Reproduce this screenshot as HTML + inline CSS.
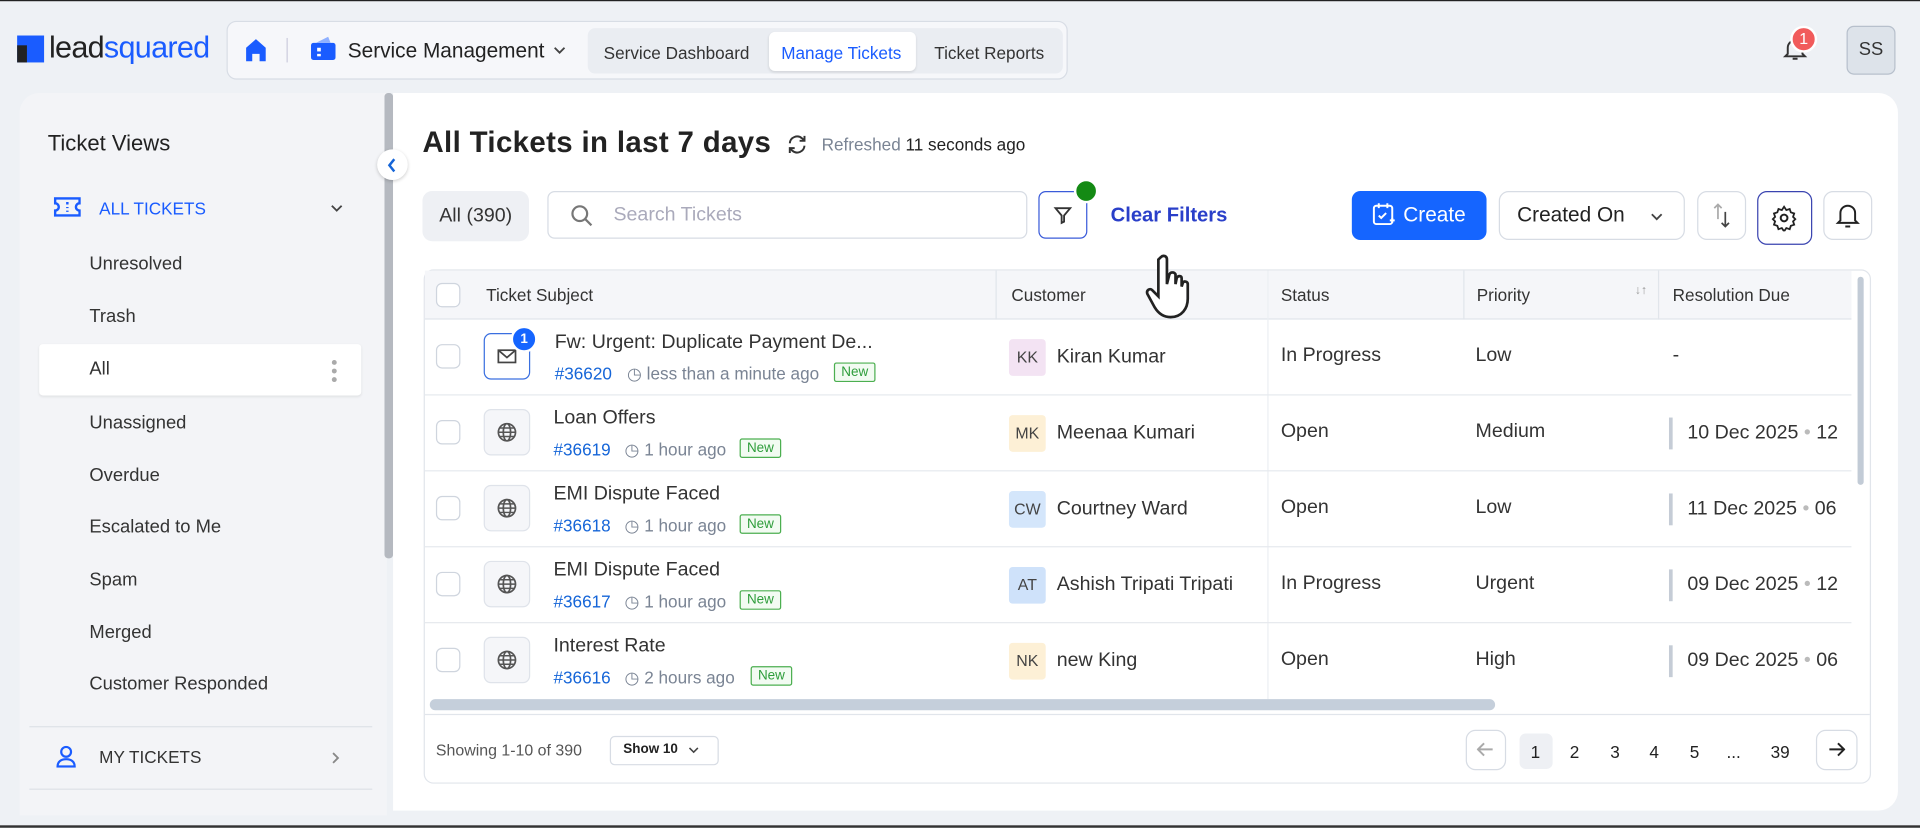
<!DOCTYPE html>
<html><head><meta charset="utf-8"><style>
*{box-sizing:border-box;margin:0;padding:0}
body{width:1920px;height:828px;overflow:hidden;background:#eef0f4;font-family:"Liberation Sans",sans-serif;color:#222b38}
#w{position:absolute;left:0;top:0;width:1568px;height:676px;transform:scale(1.22449);transform-origin:0 0;background:#eef1f5;border-top:1px solid #222;border-bottom:2px solid #333}
.a{position:absolute}
.t{position:absolute;white-space:nowrap}
.cb{position:absolute;width:20px;height:20px;border:1px solid #cfd5de;border-radius:5px;background:#fff}
.ic{position:absolute;width:38px;height:38px;border:1px solid #dfe3ea;border-radius:6px;background:#f5f6f9}
.av{position:absolute;width:30px;height:30px;border-radius:3px;font-size:13px;color:#444;text-align:center;line-height:30px}
.new{position:absolute;border:1px solid #4caf50;color:#2e9d3b;background:#f2fbf2;font-size:11px;padding:1px 5px;border-radius:2px}
.id{color:#1565d8;font-size:14px}
.mt{color:#7a8494;font-size:14px}
.cell{font-size:16px;color:#333}
.sb{position:absolute;left:73px;font-size:15px;color:#333}
.btn{position:absolute;border:1px solid #d7dce4;border-radius:8px;background:#fff}
</style></head><body><div id="w">
<svg width="0" height="0" style="position:absolute"><defs><g id="globe"><circle cx="8" cy="8" r="7" fill="none" stroke="#555" stroke-width="1.4"/><ellipse cx="8" cy="8" rx="3" ry="7" fill="none" stroke="#555" stroke-width="1.4"/><path d="M1 8h14M2 4.5h12M2 11.5h12" stroke="#555" stroke-width="1.2"/></g><path id="chev" d="M1 1l4 4 4-4" fill="none" stroke="#444" stroke-width="1.5"/></defs></svg>
<!-- logo -->
<div class="a" style="left:14px;top:28px;width:22px;height:22px;background:#1a5cff"></div>
<div class="a" style="left:14px;top:36px;width:8px;height:14px;background:#222"></div>
<div class="t" style="left:40px;top:24px;font-size:25px;letter-spacing:-0.6px;color:#222"><span>lead</span><span style="color:#1a5cff">squared</span></div>
<!-- nav -->
<div class="a" style="left:185px;top:16px;width:687px;height:48px;border:1px solid #d8dde5;border-radius:8px;background:#f6f7fa"></div>
<svg class="a" style="left:200px;top:30px" width="18" height="20" viewBox="0 0 18 20"><path d="M1 8L9 1l8 7v11h-5v-6H6v6H1z" fill="#1a5cff"/></svg>
<div class="a" style="left:234px;top:30px;width:1px;height:20px;background:#ccd"></div>
<svg class="a" style="left:253px;top:28px" width="22" height="22" viewBox="0 0 22 22"><rect x="1" y="6" width="20" height="14" rx="2" fill="#1a5cff"/><path d="M5 6l10-5 2 5z" fill="#8fb0ff"/><rect x="6" y="10" width="3" height="3" fill="#fff"/><rect x="6" y="15" width="3" height="2" fill="#fff"/></svg>
<div class="t" style="left:284px;top:31px;font-size:17px;color:#222">Service Management</div>
<svg class="a" style="left:452px;top:37px" width="10" height="7" viewBox="0 0 10 7"><use href="#chev"/></svg>
<div class="a" style="left:480px;top:22px;width:388px;height:37px;background:#eaedf2;border-radius:6px"></div>
<div class="a" style="left:628px;top:25px;width:120px;height:32px;background:#fff;border-radius:5px;box-shadow:0 1px 2px rgba(0,0,0,.1)"></div>
<div class="t" style="left:493px;top:34px;font-size:14px;color:#333">Service Dashboard</div>
<div class="t" style="left:638px;top:34px;font-size:14px;color:#1a5cff">Manage Tickets</div>
<div class="t" style="left:763px;top:34px;font-size:14px;color:#333">Ticket Reports</div>
<!-- bell + avatar -->
<svg class="a" style="left:1455px;top:28px" width="22" height="22" viewBox="0 0 22 22"><path d="M5 15V10a6 6 0 0112 0v5l2 2H3z M9 19h4" fill="none" stroke="#333" stroke-width="1.6"/></svg>
<div class="a" style="left:1462px;top:20px;width:22px;height:22px;border-radius:50%;background:#f15b5b;color:#fff;font-size:13px;text-align:center;line-height:18px;border:2px solid #fff">1</div>
<div class="a" style="left:1508px;top:20px;width:40px;height:40px;border-radius:6px;background:#dde3ea;border:1px solid #b7c0cc;font-size:15px;text-align:center;line-height:38px;color:#333">SS</div>
<!-- sidebar -->
<div class="a" style="left:16px;top:75px;width:300px;height:590px;background:#f3f4f7;border-radius:16px 0 0 0"></div>
<div class="a" style="left:314px;top:75px;width:7px;height:380px;background:#b5b9c0;border-radius:3px"></div>
<div class="t" style="left:39px;top:106px;font-size:18px;color:#222">Ticket Views</div>
<svg class="a" style="left:44px;top:160px" width="22" height="16" viewBox="0 0 22 16"><path d="M1 1h20v4a3 3 0 000 6v4H1v-4a3 3 0 000-6z" fill="none" stroke="#1a5cff" stroke-width="2"/><path d="M11 4v2M11 8v1M11 11v1" stroke="#1a5cff" stroke-width="2"/></svg>
<div class="t" style="left:81px;top:161px;font-size:14px;color:#1a5cff">ALL TICKETS</div>
<svg class="a" style="left:270px;top:166px" width="10" height="7" viewBox="0 0 10 7"><use href="#chev" style="stroke:#888"/></svg>
<div class="sb" style="top:206px">Unresolved</div>
<div class="sb" style="top:249px">Trash</div>
<div class="a" style="left:32px;top:280px;width:263px;height:42px;background:#fff;border-radius:3px;box-shadow:0 1px 2px rgba(0,0,0,.08)"></div>
<div class="sb" style="top:292px">All</div>
<div class="a" style="left:271px;top:293px;width:4px;height:4px;border-radius:50%;background:#aaa"></div>
<div class="a" style="left:271px;top:300px;width:4px;height:4px;border-radius:50%;background:#aaa"></div>
<div class="a" style="left:271px;top:307px;width:4px;height:4px;border-radius:50%;background:#aaa"></div>
<div class="sb" style="top:336px">Unassigned</div>
<div class="sb" style="top:379px">Overdue</div>
<div class="sb" style="top:421px">Escalated to Me</div>
<div class="sb" style="top:464px">Spam</div>
<div class="sb" style="top:507px">Merged</div>
<div class="sb" style="top:549px">Customer Responded</div>
<div class="a" style="left:24px;top:592px;width:280px;height:1px;background:#dde1e7"></div>
<svg class="a" style="left:46px;top:608px" width="16" height="18" viewBox="0 0 16 18"><circle cx="8" cy="5" r="4" fill="none" stroke="#1a5cff" stroke-width="1.8"/><path d="M1 17c0-4 3-6 7-6s7 2 7 6z" fill="none" stroke="#1a5cff" stroke-width="1.8"/></svg>
<div class="t" style="left:81px;top:609px;font-size:14px;color:#333">MY TICKETS</div>
<svg class="a" style="left:271px;top:613px" width="7" height="10" viewBox="0 0 7 10"><path d="M1 1l4 4-4 4" fill="none" stroke="#888" stroke-width="1.5"/></svg>
<div class="a" style="left:24px;top:643px;width:280px;height:1px;background:#dde1e7"></div>
<!-- main -->
<div class="a" style="left:321px;top:75px;width:1229px;height:586px;background:#fff;border-radius:0 16px 16px 0"></div>
<div class="a" style="left:308px;top:121px;width:25px;height:25px;border-radius:50%;background:#fff;box-shadow:0 1px 3px rgba(0,0,0,.2)"></div>
<svg class="a" style="left:316px;top:128px" width="8" height="12" viewBox="0 0 8 12"><path d="M6 1L2 6l4 5" fill="none" stroke="#1565d8" stroke-width="2"/></svg>
<div class="t" style="left:345px;top:102px;font-size:24px;font-weight:bold;color:#222;letter-spacing:0.3px">All Tickets in last 7 days</div>
<svg class="a" style="left:642px;top:108px" width="18" height="18" viewBox="0 0 18 18"><path d="M3 8a6 6 0 0110-4l2 2M15 10a6 6 0 01-10 4l-2-2" fill="none" stroke="#333" stroke-width="1.6"/><path d="M15 2v4h-4M3 16v-4h4" fill="none" stroke="#333" stroke-width="1.6"/></svg>
<div class="t" style="left:671px;top:109px;font-size:14px;color:#7a8494">Refreshed <span style="color:#222">11 seconds ago</span></div>
<div class="a" style="left:345px;top:155px;width:87px;height:41px;background:#eef0f4;border-radius:8px;font-size:16px;text-align:center;line-height:41px;color:#333">All (390)</div>
<div class="btn" style="left:447px;top:155px;width:392px;height:39px;border-radius:6px"></div>
<svg class="a" style="left:466px;top:166px" width="18" height="18" viewBox="0 0 18 18"><circle cx="7.5" cy="7.5" r="6" fill="none" stroke="#777" stroke-width="1.8"/><path d="M12 12l5 5" stroke="#777" stroke-width="1.8"/></svg>
<div class="t" style="left:501px;top:166px;font-size:16px;color:#aab">Search Tickets</div>
<div class="btn" style="left:848px;top:155px;width:40px;height:39px;border-color:#3a5bd9;border-radius:6px"></div>
<svg class="a" style="left:860px;top:167px" width="16" height="16" viewBox="0 0 16 16"><path d="M2 2h12l-5 6v5l-2 1V8z" fill="none" stroke="#333" stroke-width="1.5"/></svg>
<div class="a" style="left:877px;top:145px;width:20px;height:20px;border-radius:50%;background:#148a14;border:2px solid #fff"></div>
<div class="t" style="left:907px;top:166px;font-size:16.5px;font-weight:bold;color:#2a3fc9">Clear Filters</div>
<div class="a" style="left:1104px;top:155px;width:110px;height:40px;background:#1565ff;border-radius:7px"></div>
<svg class="a" style="left:1120px;top:164px" width="20" height="20" viewBox="0 0 20 20"><rect x="2" y="3" width="15" height="15" rx="2" fill="none" stroke="#fff" stroke-width="1.6"/><path d="M6 1v4M13 1v4M6 11l2 2 4-4M15 15h4M17 13v4" stroke="#fff" stroke-width="1.6" fill="none"/></svg>
<div class="t" style="left:1146px;top:165px;font-size:17px;color:#fff">Create</div>
<div class="btn" style="left:1224px;top:155px;width:152px;height:40px"></div>
<div class="t" style="left:1239px;top:165px;font-size:17px;color:#222">Created On</div>
<svg class="a" style="left:1348px;top:173px" width="10" height="7" viewBox="0 0 10 7"><use href="#chev" style="stroke:#222"/></svg>
<div class="btn" style="left:1386px;top:155px;width:40px;height:40px"></div>
<svg class="a" style="left:1396px;top:164px" width="20" height="22" viewBox="0 0 20 22"><path d="M7 14V2M4 5l3-3 3 3" fill="none" stroke="#aaa" stroke-width="1.4"/><path d="M13 8v12M10 17l3 3 3-3" fill="none" stroke="#444" stroke-width="1.4"/></svg>
<div class="btn" style="left:1435px;top:155px;width:45px;height:44px;border-color:#3a44b0"></div>
<svg class="a" style="left:1446px;top:166px" width="22" height="22" viewBox="0 0 24 24"><circle cx="12" cy="12" r="3" fill="none" stroke="#222" stroke-width="1.8"/><path d="M12 2l2 3 3-1 1 3 3 1-1 3 2 2-2 2 1 3-3 1-1 3-3-1-2 3-2-3-3 1-1-3-3-1 1-3-2-2 2-2-1-3 3-1 1-3 3 1z" fill="none" stroke="#222" stroke-width="1.6"/></svg>
<div class="btn" style="left:1489px;top:155px;width:40px;height:40px"></div>
<svg class="a" style="left:1499px;top:164px" width="20" height="22" viewBox="0 0 20 22"><path d="M4 15V9a6 6 0 0112 0v6l2 2H2z M8 20h4" fill="none" stroke="#222" stroke-width="1.6"/></svg>
<!-- table -->
<div class="a" style="left:346px;top:219px;width:1182px;height:420px;border:1px solid #e1e5eb;border-radius:8px"></div>
<div class="a" style="left:347px;top:220px;width:1165px;height:40px;background:#f5f6f9;border-bottom:1px solid #e1e5eb"></div>
<div class="a" style="left:813px;top:220px;width:1px;height:40px;background:#e1e5eb"></div>
<div class="a" style="left:1035px;top:220px;width:1px;height:350px;background:#eceff3"></div>
<div class="a" style="left:1195px;top:220px;width:1px;height:40px;background:#e1e5eb"></div>
<div class="a" style="left:1354px;top:220px;width:1px;height:40px;background:#e1e5eb"></div>
<div class="cb" style="left:356px;top:230px"></div>
<div class="t" style="left:397px;top:232px;font-size:14px;color:#333">Ticket Subject</div>
<div class="t" style="left:826px;top:232px;font-size:14px;color:#333">Customer</div>
<div class="t" style="left:1046px;top:232px;font-size:14px;color:#333">Status</div>
<div class="t" style="left:1206px;top:232px;font-size:14px;color:#333">Priority</div>
<div class="t" style="left:1335px;top:231px;font-size:10px;color:#999">↓↑</div>
<div class="t" style="left:1366px;top:232px;font-size:14px;color:#333">Resolution Due</div>
<div class="a" style="left:1517px;top:225px;width:5px;height:170px;background:#c2cbd6;border-radius:3px"></div>

<div class="a" style="left:347px;top:321px;width:1165px;height:1px;background:#e6e9ee"></div>
<div class="a" style="left:347px;top:383px;width:1165px;height:1px;background:#e6e9ee"></div>
<div class="a" style="left:347px;top:445px;width:1165px;height:1px;background:#e6e9ee"></div>
<div class="a" style="left:347px;top:507px;width:1165px;height:1px;background:#e6e9ee"></div>

<!-- row1 -->
<div class="cb" style="left:356px;top:280px"></div>
<div class="ic" style="left:395px;top:271px;border-color:#3a6fe0;background:#fff"></div>
<svg class="a" style="left:406px;top:284px" width="16" height="12" viewBox="0 0 16 12"><rect x="1" y="1" width="14" height="10" fill="none" stroke="#444" stroke-width="1.4"/><path d="M1 1l7 6 7-6" fill="none" stroke="#444" stroke-width="1.4"/></svg>
<div class="a" style="left:417px;top:265px;width:22px;height:22px;border-radius:50%;background:#1565ff;border:2px solid #fff;color:#fff;font-size:11px;font-weight:bold;text-align:center;line-height:18px">1</div>
<div class="t cell" style="left:453px;top:270px">Fw: Urgent: Duplicate Payment De...</div>
<div class="t" style="left:453px;top:296px"><span class="id">#36620</span></div>
<div class="t mt" style="left:512px;top:296px">◷ less than a minute ago</div>
<div class="new" style="left:681px;top:295px">New</div>
<div class="av" style="left:824px;top:276px;background:#f3e3f3">KK</div>
<div class="t cell" style="left:863px;top:282px">Kiran Kumar</div>
<div class="t cell" style="left:1046px;top:281px">In Progress</div>
<div class="t cell" style="left:1205px;top:281px">Low</div>
<div class="t cell" style="left:1366px;top:281px">-</div>

<div class="cb" style="left:356px;top:342px"></div>
<div class="ic" style="left:395px;top:333px"></div><svg class="a" style="left:406px;top:344px" width="16" height="16" viewBox="0 0 16 16"><use href="#globe"/></svg>
<div class="t cell" style="left:452px;top:332px">Loan Offers</div>
<div class="t id" style="left:452px;top:358px">#36619</div><div class="t mt" style="left:510px;top:358px">◷ 1 hour ago</div><div class="new" style="left:604px;top:357px">New</div>
<div class="av" style="left:824px;top:338px;background:#fdf0d6">MK</div>
<div class="t cell" style="left:863px;top:344px">Meenaa Kumari</div>
<div class="t cell" style="left:1046px;top:343px">Open</div>
<div class="t cell" style="left:1205px;top:343px">Medium</div>
<div class="a" style="left:1363px;top:340px;width:3px;height:26px;background:#c5ccd6"></div>
<div class="t cell" style="left:1378px;top:344px">10 Dec 2025 <span style="color:#bbb">•</span> 12</div>

<div class="cb" style="left:356px;top:404px"></div>
<div class="ic" style="left:395px;top:395px"></div><svg class="a" style="left:406px;top:406px" width="16" height="16" viewBox="0 0 16 16"><use href="#globe"/></svg>
<div class="t cell" style="left:452px;top:394px">EMI Dispute Faced</div>
<div class="t id" style="left:452px;top:420px">#36618</div><div class="t mt" style="left:510px;top:420px">◷ 1 hour ago</div><div class="new" style="left:604px;top:419px">New</div>
<div class="av" style="left:824px;top:400px;background:#d4e6fb">CW</div>
<div class="t cell" style="left:863px;top:406px">Courtney Ward</div>
<div class="t cell" style="left:1046px;top:405px">Open</div>
<div class="t cell" style="left:1205px;top:405px">Low</div>
<div class="a" style="left:1363px;top:402px;width:3px;height:26px;background:#c5ccd6"></div>
<div class="t cell" style="left:1378px;top:406px">11 Dec 2025 <span style="color:#bbb">•</span> 06</div>

<div class="cb" style="left:356px;top:466px"></div>
<div class="ic" style="left:395px;top:457px"></div><svg class="a" style="left:406px;top:468px" width="16" height="16" viewBox="0 0 16 16"><use href="#globe"/></svg>
<div class="t cell" style="left:452px;top:456px">EMI Dispute Faced</div>
<div class="t id" style="left:452px;top:482px">#36617</div><div class="t mt" style="left:510px;top:482px">◷ 1 hour ago</div><div class="new" style="left:604px;top:481px">New</div>
<div class="av" style="left:824px;top:462px;background:#cfe2fa">AT</div>
<div class="t cell" style="left:863px;top:468px">Ashish Tripati Tripati</div>
<div class="t cell" style="left:1046px;top:467px">In Progress</div>
<div class="t cell" style="left:1205px;top:467px">Urgent</div>
<div class="a" style="left:1363px;top:464px;width:3px;height:26px;background:#c5ccd6"></div>
<div class="t cell" style="left:1378px;top:468px">09 Dec 2025 <span style="color:#bbb">•</span> 12</div>

<div class="cb" style="left:356px;top:528px"></div>
<div class="ic" style="left:395px;top:519px"></div><svg class="a" style="left:406px;top:530px" width="16" height="16" viewBox="0 0 16 16"><use href="#globe"/></svg>
<div class="t cell" style="left:452px;top:518px">Interest Rate</div>
<div class="t id" style="left:452px;top:544px">#36616</div><div class="t mt" style="left:510px;top:544px">◷ 2 hours ago</div><div class="new" style="left:613px;top:543px">New</div>
<div class="av" style="left:824px;top:524px;background:#fdf0d6">NK</div>
<div class="t cell" style="left:863px;top:530px">new King</div>
<div class="t cell" style="left:1046px;top:529px">Open</div>
<div class="t cell" style="left:1205px;top:529px">High</div>
<div class="a" style="left:1363px;top:526px;width:3px;height:26px;background:#c5ccd6"></div>
<div class="t cell" style="left:1378px;top:530px">09 Dec 2025 <span style="color:#bbb">•</span> 06</div>

<div class="a" style="left:351px;top:570px;width:870px;height:9px;background:#c5cfdb;border-radius:5px"></div>
<div class="a" style="left:347px;top:582px;width:1180px;height:1px;background:#e1e5eb"></div>
<div class="t" style="left:356px;top:604px;font-size:13px;color:#555">Showing 1-10 of 390</div>
<div class="btn" style="left:498px;top:600px;width:89px;height:24px;border-radius:4px"></div>
<div class="t" style="left:509px;top:605px;font-size:11px;color:#222;font-weight:bold">Show 10</div>
<svg class="a" style="left:562px;top:609px" width="9" height="6" viewBox="0 0 10 7"><use href="#chev" style="stroke:#222"/></svg>
<div class="btn" style="left:1197px;top:595px;width:33px;height:33px"></div>
<svg class="a" style="left:1206px;top:605px" width="14" height="12" viewBox="0 0 14 12"><path d="M13 6H2M6 1L1 6l5 5" fill="none" stroke="#aaa" stroke-width="1.6"/></svg>
<div class="a" style="left:1241px;top:598px;width:27px;height:29px;background:#eef0f4;border-radius:5px"></div>
<div class="t" style="left:1250px;top:605px;font-size:14px;color:#222">1</div>
<div class="t" style="left:1282px;top:605px;font-size:14px;color:#222">2</div>
<div class="t" style="left:1315px;top:605px;font-size:14px;color:#222">3</div>
<div class="t" style="left:1347px;top:605px;font-size:14px;color:#222">4</div>
<div class="t" style="left:1380px;top:605px;font-size:14px;color:#222">5</div>
<div class="t" style="left:1410px;top:605px;font-size:14px;color:#222">...</div>
<div class="t" style="left:1446px;top:605px;font-size:14px;color:#222">39</div>
<div class="btn" style="left:1483px;top:595px;width:34px;height:33px"></div>
<svg class="a" style="left:1493px;top:605px" width="14" height="12" viewBox="0 0 14 12"><path d="M1 6h11M8 1l5 5-5 5" fill="none" stroke="#222" stroke-width="1.6"/></svg>
<!-- cursor hand -->
<svg class="a" style="left:930px;top:205px" width="50" height="60" viewBox="0 0 50 60"><path d="M18 4c2-2 5-1 5 2v20l2-8c1-2 4-2 5 0v8l1-5c1-2 4-2 4 0v7l1-3c1-2 4-1 4 1v12c0 8-5 15-14 15-6 0-10-3-13-8L7 34c-1-3 2-5 4-3l5 5V6z" fill="#fff" stroke="#222" stroke-width="2.2"/></svg>
</div></body></html>
